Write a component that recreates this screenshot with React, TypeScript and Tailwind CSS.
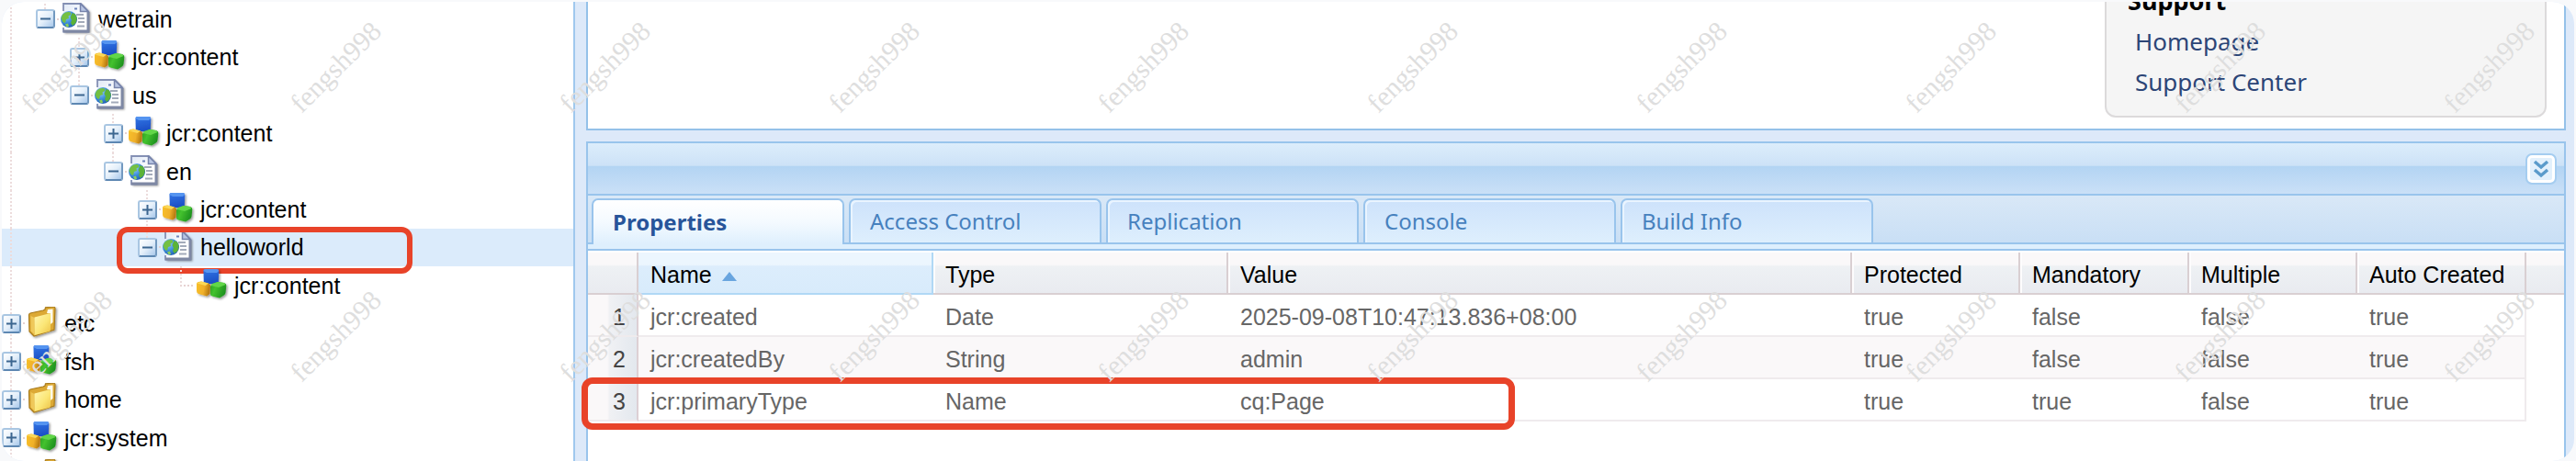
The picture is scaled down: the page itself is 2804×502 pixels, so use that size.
import React from "react";

type IconName = "page" | "cubes" | "folder";
type Toggle = "plus" | "minus" | "none";

interface TreeNode {
  label: string;
  level: number;
  icon: IconName;
  toggle: Toggle;
  lineAbove: boolean;
  lineBelow: boolean;
  selected?: boolean;
}

const nodes: TreeNode[] = [
  { label: "wetrain", level: 1, icon: "page", toggle: "minus", lineAbove: true, lineBelow: false },
  { label: "jcr:content", level: 2, icon: "cubes", toggle: "plus", lineAbove: true, lineBelow: true },
  { label: "us", level: 2, icon: "page", toggle: "minus", lineAbove: true, lineBelow: false },
  { label: "jcr:content", level: 3, icon: "cubes", toggle: "plus", lineAbove: true, lineBelow: true },
  { label: "en", level: 3, icon: "page", toggle: "minus", lineAbove: true, lineBelow: false },
  { label: "jcr:content", level: 4, icon: "cubes", toggle: "plus", lineAbove: true, lineBelow: true },
  { label: "helloworld", level: 4, icon: "page", toggle: "minus", lineAbove: true, lineBelow: false, selected: true },
  { label: "jcr:content", level: 5, icon: "cubes", toggle: "none", lineAbove: true, lineBelow: false },
  { label: "etc", level: 0, icon: "folder", toggle: "plus", lineAbove: true, lineBelow: true },
  { label: "fsh", level: 0, icon: "cubes", toggle: "plus", lineAbove: true, lineBelow: true },
  { label: "home", level: 0, icon: "folder", toggle: "plus", lineAbove: true, lineBelow: true },
  { label: "jcr:system", level: 0, icon: "cubes", toggle: "plus", lineAbove: true, lineBelow: true },
  { label: "", level: 0, icon: "folder", toggle: "plus", lineAbove: true, lineBelow: true },
];

const tabs = ["Properties", "Access Control", "Replication", "Console", "Build Info"];

const columns = ["Name", "Type", "Value", "Protected", "Mandatory", "Multiple", "Auto Created"];

const rows = [
  ["jcr:created", "Date", "2025-09-08T10:47:13.836+08:00", "true", "false", "false", "true"],
  ["jcr:createdBy", "String", "admin", "true", "false", "false", "true"],
  ["jcr:primaryType", "Name", "cq:Page", "true", "true", "false", "true"],
];

function Gradients() {
  return (
    <svg className="absolute h-0 w-0" aria-hidden="true">
      <defs>
        <linearGradient id="blueFace" x1="0" y1="0" x2="0.2" y2="1">
          <stop offset="0" stopColor="#3377e6" />
          <stop offset="1" stopColor="#1c50c6" />
        </linearGradient>
        <linearGradient id="goldFace" x1="0" y1="0" x2="1" y2="0.2">
          <stop offset="0" stopColor="#f8c02a" />
          <stop offset="0.6" stopColor="#f0b02a" />
          <stop offset="1" stopColor="#b77a10" />
        </linearGradient>
        <linearGradient id="greenFace" x1="0" y1="0" x2="1" y2="0.4">
          <stop offset="0" stopColor="#2a9a24" />
          <stop offset="0.4" stopColor="#44c22e" />
          <stop offset="1" stopColor="#1f931f" />
        </linearGradient>
        <linearGradient id="sheet" x1="0" y1="0" x2="1" y2="1">
          <stop offset="0" stopColor="#dfe8f6" />
          <stop offset="0.6" stopColor="#ffffff" />
        </linearGradient>
        <radialGradient id="ocean" cx="0.35" cy="0.3" r="0.8">
          <stop offset="0" stopColor="#9ad0fa" />
          <stop offset="0.5" stopColor="#3f8fdc" />
          <stop offset="1" stopColor="#1b57ab" />
        </radialGradient>
        <linearGradient id="folderFront" x1="0" y1="0" x2="1" y2="1">
          <stop offset="0" stopColor="#fff7b4" />
          <stop offset="0.55" stopColor="#fbe676" />
          <stop offset="1" stopColor="#ecc044" />
        </linearGradient>
        <filter id="iconShadow" x="-20%" y="-20%" width="150%" height="150%">
          <feDropShadow dx="1.5" dy="1.5" stdDeviation="1.2" floodColor="#000000" floodOpacity="0.4" />
        </filter>
      </defs>
    </svg>
  );
}

function NodeIcon({ name }: { name: IconName }) {
  return (
    <svg viewBox="0 0 36 36" className="h-[36px] w-[36px] shrink-0" aria-hidden="true">
      {name === "cubes" && (
        <g filter="url(#iconShadow)">
          <path d="M7.500 2 Q7.500 0 9.500 0 H22 Q24 0 24.200 2 L23.800 14 Q23.500 16 21 16 H10 Q8 16 7.800 14 Z" fill="url(#blueFace)" />
          <path d="M7.500 2 Q7.500 0 9.500 0 H22 Q24 0 24.200 2 L22 4 H11 Z" fill="#5594f0" />
          <path d="M0 16 Q0 14.500 2 14 L5 13.500 L13 15.500 L15 17.500 L14.500 27 L11 29.500 L2 27 Q0 26 0 24 Z" fill="url(#goldFace)" />
          <path d="M0.500 15.500 L5 13.500 L13 15.500 L9.500 18 Z" fill="#fbd858" />
          <path d="M15 19 L17 16 L23 14 L30 15 Q32.500 16 32.300 18 L31.500 26 Q31 28 29 29 L25 31.500 L17 29.500 Q15 29 15 27 Z" fill="url(#greenFace)" />
          <path d="M15.500 18 L17 16 L23 14 L30 15 L31.500 17 L24 20 Z" fill="#62d648" />
        </g>
      )}
      {name === "page" && (
        <g>
          <g filter="url(#iconShadow)">
            <path d="M3 0.500 H22 L31 9 V32 H3 Z" fill="url(#sheet)" />
          </g>
          <path d="M3 9 V1 H22 L30 9 V31.500 H3 V27" fill="none" stroke="#8490b4" strokeWidth="1.800" />
          <path d="M30 10 V31 H3" fill="none" stroke="#7e88a4" strokeWidth="3" />
          <path d="M21.500 1 V9.500 H30 Z" fill="#b9c6e4" stroke="#7683ab" strokeWidth="1.500" />
          <path d="M15 6.500 h3" stroke="#6d83ba" strokeWidth="2" />
          <path d="M17 13 h8 M19 17 h7 M19 21 h7 M18 25.500 h8" stroke="#a3abba" strokeWidth="1.800" />
          <circle cx="9" cy="18" r="9" fill="url(#ocean)" />
          <path d="M2 13 Q6 8.500 11 10.500 L11 13 L8.500 14.500 L9 17 L6 18 L5 22 L2.500 21 L0.500 17 Z" fill="#74c043" />
          <path d="M12.500 11 L16 12.500 L17.800 17 L16.500 22 L13 25 L11 22 L12 19 L10.500 16 Z" fill="#5cb338" />
          <path d="M5 23.500 L8 22.500 L9 26 L6.500 26.200 Z" fill="#8bd058" />
        </g>
      )}
      {name === "folder" && (
        <g filter="url(#iconShadow)">
          <path
            d="M2.500 9 Q2.500 7.500 4 7 L18 4 L20 3 L20.500 0.800 L29 0 Q31 0 31 2 L30 25 L8 32 L3 27 Z"
            fill="#dca935"
            stroke="#a97b1c"
            strokeWidth="1.200"
          />
          <path d="M23 3 L28.500 2.400 V17 L26 19 V7.500 L22 7 Z" fill="#fffdf0" />
          <path d="M4.500 10 L8.500 12 L8 30 L4.500 26.500 Z" fill="#efc85a" />
          <path d="M8.500 11.500 L24 7.600 Q26 7.400 26.200 9 L26 25 Q26 26.500 24.500 27 L8.500 31 Z" fill="url(#folderFront)" />
        </g>
      )}
    </svg>
  );
}

const vDots = "bg-[repeating-linear-gradient(to_bottom,#ecdcdc_0_2px,transparent_2px_4px)]";
const hDots = "bg-[repeating-linear-gradient(to_right,#e6d2d2_0_2px,transparent_2px_4px)]";

function TreeRow({ node }: { node: TreeNode }) {
  const leaf = node.toggle === "none";
  return (
    <li className={`relative flex min-h-0 items-center ${node.selected ? "bg-[#dbebfb]" : ""}`}>
      {Array.from({ length: node.level }, (_, i) => (
        <span key={i} className="flex w-[37px] shrink-0 self-stretch pl-[9px]">
          {i === 0 && <span className={`w-[2px] ${vDots}`} />}
        </span>
      ))}
      <span className="relative flex w-[27px] shrink-0 items-center self-stretch">
        <span className="absolute inset-y-0 left-[9px] flex w-[2px] flex-col">
          <span className={`flex-1 ${node.lineAbove ? vDots : ""}`} />
          <span className={`flex-1 ${node.lineBelow ? vDots : ""}`} />
        </span>
        {leaf ? (
          <span className={`ml-[9px] h-[2px] w-[16px] ${hDots}`} />
        ) : (
          <>
            <button
              type="button"
              aria-label={`${node.toggle === "plus" ? "Expand" : "Collapse"} ${node.label || "folder"}`}
              className="relative flex h-[21px] w-[21px] items-center justify-center rounded-[3px] border-2 border-t-[#a9c6e2] border-r-[#7299c0] border-b-[#5d87b2] border-l-[#a9c6e2] bg-gradient-to-br from-white via-[#e4effa] to-[#a8c8ea]"
            >
              <svg viewBox="0 0 17 17" className="h-[17px] w-[17px] shrink-0" aria-hidden="true">
                <path d={node.toggle === "plus" ? "M3 8.500 H14 M8.500 3 V14" : "M3 8.500 H14"} stroke="#3c6690" strokeWidth="2" />
              </svg>
            </button>
            <span className="ml-[2px] h-[2px] w-[2px] bg-[#e6d2d2]" />
          </>
        )}
      </span>
      <NodeIcon name={node.icon} />
      {node.label && (
        <a href="#" className="ml-[5px] text-[25px] leading-[30px] text-black">
          {node.label}
        </a>
      )}
      {node.selected && (
        <span className="pointer-events-none absolute -top-[2px] left-[125px] h-[51px] w-[322px] rounded-[12px] border-[6px] border-[#e84329]" />
      )}
    </li>
  );
}

function Tab({ label, active }: { label: string; active: boolean }) {
  return (
    <button
      type="button"
      role="tab"
      aria-selected={active}
      className={
        active
          ? "-mb-[2px] h-[50px] w-[275px] rounded-t-[7px] border-2 border-b-0 border-[#99c4ec] bg-gradient-to-b from-white via-[#f4faff] to-[#deeffd] px-[21px] text-left font-bold text-[#28559a]"
          : "h-[48px] w-[275px] rounded-t-[7px] border-2 border-b-0 border-[#99c4ec] bg-gradient-to-b from-[#cde2fb] to-[#deeffd] px-[21px] text-left text-[#4781be] shadow-[inset_2px_2px_0_#e9f4ff]"
      }
    >
      {label}
    </button>
  );
}

function PropertyTable() {
  return (
    <table className="mt-[2px] w-full table-fixed border-separate border-spacing-0 text-left text-[25px] leading-[30px]">
      <colgroup>
        <col className="w-[55px]" />
        <col className="w-[321px]" />
        <col className="w-[321px]" />
        <col />
        <col className="w-[183px]" />
        <col className="w-[184px]" />
        <col className="w-[183px]" />
        <col className="w-[184px]" />
        <col className="w-[41px]" />
      </colgroup>
      <thead>
        <tr className="h-[46px]">
          <th className="border-r-2 border-b-2 border-[#d9cfd2] bg-[linear-gradient(#faf8f9_0_30%,#eef1f4_34%,#e9ebf0)]" />
          {columns.map((name, i) => (
            <th
              key={name}
              scope="col"
              aria-sort={i === 0 ? "ascending" : undefined}
              className={
                i === 0
                  ? "border-r-2 border-b-2 border-[#b0d8f5] bg-[linear-gradient(#ecf6fe_0_30%,#dcedfc_34%,#d8ebfb)] px-[13px] pt-[3px] pb-0 font-normal text-black"
                  : "border-r-2 border-b-2 border-[#d9cfd2] bg-[linear-gradient(#faf8f9_0_30%,#eef1f4_34%,#e9ebf0)] px-[13px] pt-[3px] pb-0 font-normal whitespace-nowrap text-black shadow-[inset_2px_0_0_#fdfcfd]"
              }
            >
              {i === 0 ? (
                <span className="flex items-center gap-[11px]">
                  {name}
                  <svg viewBox="0 0 16 10" className="mt-[4px] h-[10px] w-[16px]" aria-hidden="true">
                    <path d="M0 10 L8 0 L16 10 Z" fill="#69a5df" />
                  </svg>
                </span>
              ) : (
                name
              )}
            </th>
          ))}
          <th className="border-b-2 border-[#d9cfd2] bg-[linear-gradient(#faf8f9_0_30%,#eef1f4_34%,#e9ebf0)]" />
        </tr>
      </thead>
      <tbody>
        {rows.map((cells, r) => (
          <tr key={cells[0]} className={r === 1 ? "relative h-[46px] bg-[#faf8f9]" : "relative h-[46px]"}>
            <td className="border-r-2 border-b-2 border-r-[#ddd0d4] border-b-[#efebed] bg-[linear-gradient(to_right,#faf8f9_0_40%,#f0f1f4_44%,#e3e8ee)] pt-[3px] pr-[12px] pb-0 pl-0 text-right text-[#444444]">
              {r + 1}
            </td>
            {cells.map((value, c) => (
              <td
                key={c}
                className={
                  c === cells.length - 1
                    ? "border-r-2 border-b-2 border-[#efebed] px-[13px] pt-[3px] pb-0 text-[#666666]"
                    : "border-b-2 border-[#efebed] px-[13px] pt-[3px] pb-0 whitespace-nowrap text-[#666666]"
                }
              >
                {value}
              </td>
            ))}
            <td className="bg-white">
              {r === 2 && (
                <span className="pointer-events-none absolute -top-[2px] -left-[7px] h-[57px] w-[1016px] rounded-[12px] border-[7px] border-[#e84329]" />
              )}
            </td>
          </tr>
        ))}
      </tbody>
    </table>
  );
}

function Watermarks() {
  return (
    <div
      aria-hidden="true"
      className="pointer-events-none absolute inset-y-0 left-0 -right-[293px] grid auto-rows-[293px] grid-cols-[repeat(auto-fill,293px)] overflow-hidden"
    >
      {Array.from({ length: 20 }, (_, i) => (
        <div key={i} className="flex h-[146px] w-[144px] items-center justify-center">
          <span className="-rotate-45 font-['Liberation_Serif',serif] text-[30px] leading-[30px] text-[#dedede]">fengsh998</span>
        </div>
      ))}
    </div>
  );
}

export default function App() {
  return (
    <div className="relative h-screen overflow-hidden bg-[#f8f9fb] px-[2px] pt-[2px] font-['Liberation_Sans',Arial,sans-serif]">
      <Gradients />
      <div className="flex h-full overflow-hidden rounded-[24px] bg-[#dde9f9]">
        <nav aria-label="Repository" className="w-[624px] shrink-0 border-r-2 border-[#9fc8ee] bg-white">
          <ul className="-mt-[2px] grid h-[539px] auto-rows-fr">
            {nodes.map((node, i) => (
              <TreeRow key={i} node={node} />
            ))}
          </ul>
        </nav>

        <div className="ml-[12px] mr-[9px] flex min-w-0 flex-1 flex-col gap-[12px]">
          <section className="flex h-[140px] shrink-0 items-end justify-end overflow-hidden border-2 border-t-0 border-[#94c1e9] bg-white pr-[19px] pb-[12px] font-['Noto_Sans',sans-serif]">
            <div className="w-[481px] shrink-0 rounded-[12px] border-2 border-[#dcdadb] bg-[#f5f5f5] px-[23px] pb-[15px] leading-[44px]">
              <h2 className="text-[27px] font-bold text-black">Support</h2>
              <ul className="pl-[8px] text-[26px] text-[#2c4577]">
                <li>
                  <a href="#">Homepage</a>
                </li>
                <li>
                  <a href="#">Support Center</a>
                </li>
              </ul>
            </div>
          </section>

          <section className="flex min-h-0 flex-1 flex-col border-2 border-b-0 border-[#99c4ec] bg-white">
            <header className="flex h-[57px] shrink-0 items-center justify-end border-b-2 border-[#99c4ec] bg-[linear-gradient(#dcedfb_0,#cde2f7_44%,#b3d4f3_46%,#cae0f7)] pr-[8px]">
              <button
                type="button"
                aria-label="Collapse panel"
                className="flex h-[34px] w-[34px] items-center justify-center rounded-[7px] border-2 border-[#a5cdf0] bg-[#e2f0fc] shadow-[inset_0_0_0_3px_#ffffff]"
              >
                <svg viewBox="0 0 18 20" className="h-[20px] w-[18px]" fill="none" stroke="#5b9bcb" strokeWidth="3.500" aria-hidden="true">
                  <path d="M2 2 L9 8 L16 2" />
                  <path d="M2 11 L9 17 L16 11" />
                </svg>
              </button>
            </header>
            <div
              role="tablist"
              className="flex h-[53px] shrink-0 gap-[5px] border-b-2 border-[#99c4ec] bg-gradient-to-b from-[#d9e8f7] to-[#c9dff5] pt-[3px] pl-[4px] font-['Noto_Sans',sans-serif] text-[24px] leading-[32px]"
            >
              {tabs.map((label, i) => (
                <Tab key={label} label={label} active={i === 0} />
              ))}
            </div>
            <div className="h-[7px] shrink-0 border-b-2 border-[#99c4ec] bg-[#deeffd]" />
            <PropertyTable />
          </section>
        </div>
      </div>
      <Watermarks />
    </div>
  );
}
